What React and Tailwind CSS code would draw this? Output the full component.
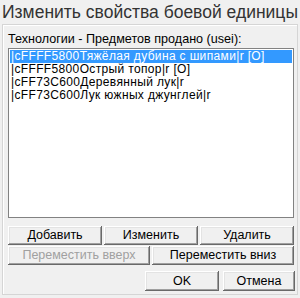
import React from "react";

const btn =
  "flex items-center justify-center bg-[#f0f0f0] text-[12.5px] leading-none text-black shadow-[inset_-1px_-1px_0_#696969,inset_1px_1px_0_#ffffff,inset_-2px_-2px_0_#a0a0a0,inset_2px_2px_0_#e3e3e3]";

export default function App() {
  const items = [
    "|cFFFF5800Тяжёлая дубина с шипами|r [O]",
    "|cFFFF5800Острый топор|r [O]",
    "|cFF73C600Деревянный лук|r",
    "|cFF73C600Лук южных джунглей|r",
  ];
  return (
    <div
      className="w-[300px] h-[298px] bg-[#f0f0f0] flex flex-col"
      style={{ fontFamily: '"Liberation Sans", Arial, sans-serif' }}
    >
      <div className="h-[24px] flex items-center justify-center text-[17.5px] text-[#333333]">
        Изменить свойства боевой единицы
      </div>
      <div className="mx-[2px] h-[271px] border border-[#d5d5d5] shadow-[inset_1px_1px_0_#ffffff] flex flex-col pl-[5px] pt-[7px]">
        <div className="text-[12.6px] leading-[14px] text-black whitespace-nowrap">
          Технологии - Предметов продано (usei):
        </div>
        <div className="mt-[2px] w-[286px] h-[170px] border border-[#828282] bg-white p-[1px] flex flex-col">
          {items.map((t, i) => (
            <div
              key={i}
              className={
                "h-[13px] pl-[1px] text-[12px] tracking-[0.35px] leading-[13px] whitespace-nowrap " +
                (i === 0 ? "bg-[#3399ff] text-white" : "text-black")
              }
            >
              {t}
            </div>
          ))}
        </div>
        <div className="mt-[8px] w-[286px] grid grid-cols-3 gap-[2px]">
          <div className={btn + " h-[19px]"}>Добавить</div>
          <div className={btn + " h-[19px]"}>Изменить</div>
          <div className={btn + " h-[19px]"}>Удалить</div>
        </div>
        <div className="mt-[1px] w-[286px] grid grid-cols-2 gap-[2px]">
          <div className={btn + " h-[19px]"}>
            <span className="text-[#a0a0a0]">Переместить вверх</span>
          </div>
          <div className={btn + " h-[19px]"}>Переместить вниз</div>
        </div>
        <div className="mt-[6px] w-[287px] flex justify-end gap-[4px]">
          <div className={btn + " h-[20px] w-[74px]"}>OK</div>
          <div className={btn + " h-[20px] w-[72px]"}>Отмена</div>
        </div>
      </div>
    </div>
  );
}
